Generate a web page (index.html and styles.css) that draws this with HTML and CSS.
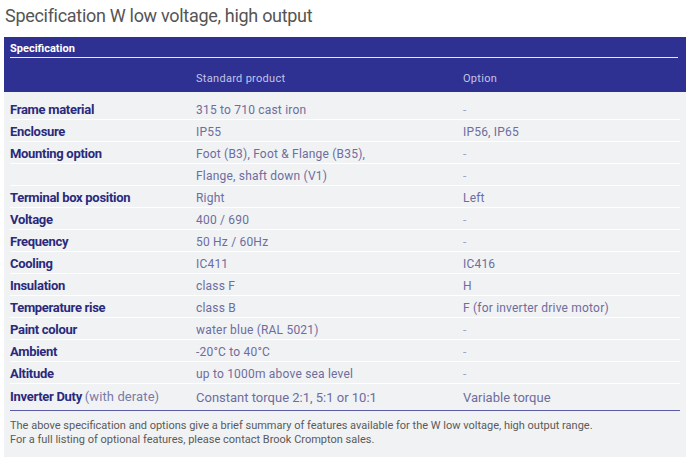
FILE: index.html
```html
<!DOCTYPE html>
<html lang="en">
<head>
<meta charset="utf-8">
<title>Specification W low voltage, high output</title>
<link rel="stylesheet" href="styles.css">
</head>
<body>
<h1 class="title">Specification W low voltage, high output</h1>
<div class="spec">
  <div class="spec-head">
    <div class="spec-caption">Specification</div>
    <div class="spec-cols">
      <span></span>
      <span>Standard product</span>
      <span>Option</span>
    </div>
  </div>
  <div class="spec-body">
    <div class="row"><span class="lab">Frame material</span><span class="val">315 to 710 cast iron</span><span class="opt dash">-</span></div>
    <div class="row"><span class="lab">Enclosure</span><span class="val">IP55</span><span class="opt">IP56, IP65</span></div>
    <div class="row"><span class="lab">Mounting option</span><span class="val">Foot (B3), Foot &amp; Flange (B35),</span><span class="opt dash">-</span></div>
    <div class="row"><span class="lab"></span><span class="val">Flange, shaft down (V1)</span><span class="opt dash">-</span></div>
    <div class="row"><span class="lab">Terminal box position</span><span class="val">Right</span><span class="opt">Left</span></div>
    <div class="row"><span class="lab">Voltage</span><span class="val">400 / 690</span><span class="opt dash">-</span></div>
    <div class="row"><span class="lab">Frequency</span><span class="val">50 Hz / 60Hz</span><span class="opt dash">-</span></div>
    <div class="row"><span class="lab">Cooling</span><span class="val">IC411</span><span class="opt">IC416</span></div>
    <div class="row"><span class="lab">Insulation</span><span class="val">class F</span><span class="opt">H</span></div>
    <div class="row"><span class="lab">Temperature rise</span><span class="val">class B</span><span class="opt">F (for inverter drive motor)</span></div>
    <div class="row"><span class="lab">Paint colour</span><span class="val">water blue (RAL 5021)</span><span class="opt dash">-</span></div>
    <div class="row"><span class="lab">Ambient</span><span class="val">-20°C to 40°C</span><span class="opt dash">-</span></div>
    <div class="row"><span class="lab">Altitude</span><span class="val">up to 1000m above sea level</span><span class="opt dash">-</span></div>
    <div class="row row-last"><span class="lab">Inverter Duty <span class="note">(with derate)</span></span><span class="val big">Constant torque 2:1, 5:1 or 10:1</span><span class="opt big">Variable torque</span></div>
  </div>
  <div class="spec-foot">
    <p>The above specification and options give a brief summary of features available for the W low voltage, high output range.</p>
    <p>For a full listing of optional features, please contact Brook Crompton sales.</p>
  </div>
</div>
</body>
</html>
```

FILE: styles.css
```css
html, body {
  margin: 0;
  padding: 0;
  background: #ffffff;
}
body {
  font-family: Roboto, "Liberation Sans", sans-serif;
}
.title {
  margin: 0;
  padding: 5px 0 0 5px;
  height: 37px;
  box-sizing: border-box;
  font-size: 18px;
  line-height: 22px;
  font-weight: 400;
  color: #555555;
  letter-spacing: -0.3px;
}
.spec {
  margin-left: 4px;
  width: 682px;
  background: #f1f2f4;
  padding-bottom: 10px;
}
.spec-head {
  background: #2e3192;
  padding: 0 8px 0 6px;
  height: 55px;
  box-sizing: border-box;
}
.spec-caption {
  height: 21px;
  box-sizing: border-box;
  border-bottom: 1px solid #e8e8f4;
  padding-top: 5px;
  font-size: 11px;
  line-height: 13px;
  font-weight: 700;
  color: #ffffff;
}
.spec-cols {
  display: grid;
  grid-template-columns: 186px 267px 1fr;
  padding-top: 14px;
  font-size: 11px;
  line-height: 14px;
  color: #c4c4e6;
  letter-spacing: 0.3px;
}
.spec-body {
  padding: 6px 6px 0 6px;
}
.row {
  display: grid;
  grid-template-columns: 186px 267px 1fr;
  height: 22px;
  box-sizing: border-box;
  border-bottom: 1px solid #ffffff;
  padding-top: 4px;
  font-size: 12px;
  line-height: 16px;
}
.row-last {
  height: 27px;
  border-bottom: 1px solid #5c5ca6;
  padding-top: 5px;
}
.lab {
  font-size: 13px;
  font-weight: 700;
  color: #2a2a7c;
  letter-spacing: -0.3px;
}
.val, .opt {
  color: #6d6d9e;
  letter-spacing: 0.2px;
}
.dash {
  color: #a0a0c4;
}
.note {
  font-weight: 400;
  color: #7a7aa6;
  letter-spacing: 0.1px;
}
.big {
  font-size: 13px;
  line-height: 18px;
  letter-spacing: 0;
}
.spec-foot {
  padding: 8px 6px 0 6px;
  font-size: 11px;
  line-height: 14px;
  color: #5a5a5a;
}
.spec-foot p {
  margin: 0;
}
```
